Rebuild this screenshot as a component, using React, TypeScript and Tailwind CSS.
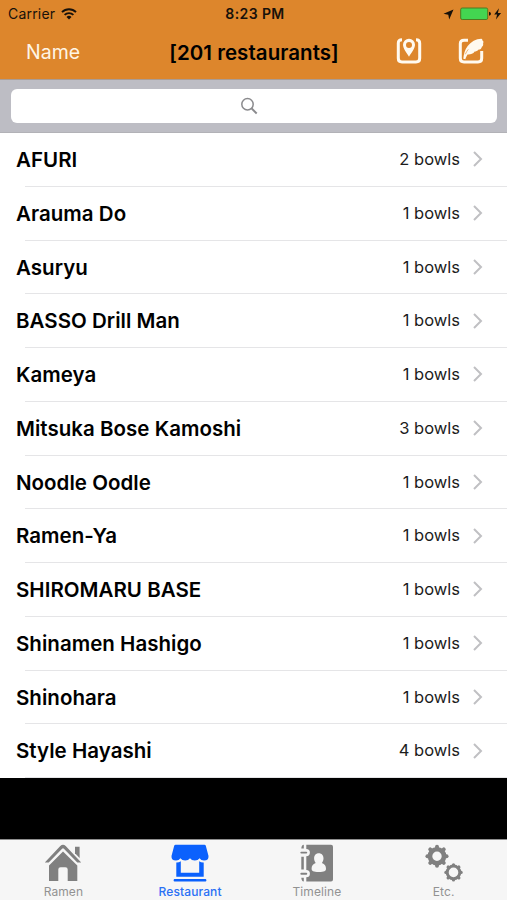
import React from "react";

const restaurants = [
    { name: "AFURI", bowls: 2 },
    { name: "Arauma Do", bowls: 1 },
    { name: "Asuryu", bowls: 1 },
    { name: "BASSO Drill Man", bowls: 1 },
    { name: "Kameya", bowls: 1 },
    { name: "Mitsuka Bose Kamoshi", bowls: 3 },
    { name: "Noodle Oodle", bowls: 1 },
    { name: "Ramen-Ya", bowls: 1 },
    { name: "SHIROMARU BASE", bowls: 1 },
    { name: "Shinamen Hashigo", bowls: 1 },
    { name: "Shinohara", bowls: 1 },
    { name: "Style Hayashi", bowls: 4 },
];

function WifiIcon() {
    return (
        <svg width="16" height="12" viewBox="0 0 16 12" fill="none" stroke="#17110a" strokeWidth="1.9">
            <path d="M1 4.1a10 10 0 0 1 14 0" />
            <path d="M3.6 6.9a6.3 6.3 0 0 1 8.8 0" />
            <path d="M8 11.4 5.5 8.9a3.6 3.6 0 0 1 5 0z" fill="#17110a" stroke="none" />
        </svg>
    );
}

function MapIcon() {
    return (
        <svg width="26" height="26" viewBox="0 0 26 26" fill="none">
            <path
                d="M6 1.700C3.400 1.700 2.300 3 2.300 5.200V20.200c0 2.600 1.200 3.700 3.700 3.700h14c2.500 0 3.700-1.100 3.700-3.700V5.200c0-2.200-1.100-3.500-3.700-3.500"
                stroke="#fffaf0"
                strokeWidth="3"
            />
            <path
                fillRule="evenodd"
                d="M13 .8a6 6 0 0 0-6 6c0 3.500 3.300 7.500 6 12 2.700-4.500 6-8.500 6-12a6 6 0 0 0-6-6zm0 3.100a3 3 0 1 1 0 6 3 3 0 0 1 0-6z"
                fill="#fffaf0"
            />
        </svg>
    );
}

function ComposeIcon() {
    return (
        <svg width="26" height="26" viewBox="0 0 26 26" fill="none">
            <path
                d="M10 2.200H6C3.500 2.200 2.300 3.400 2.300 5.800v14.400c0 2.600 1.200 3.700 3.700 3.700h14c2.500 0 3.700-1.100 3.700-3.700V13"
                stroke="#fffaf0"
                strokeWidth="3"
            />
            <path
                d="M5.300 20.800c.5-4.600 1.500-9 4.200-12.500C13 3.800 18 .9 23.300.8c1 .1 1.200 1.200 1.100 1.800 1.300.7 1.200 1.800.7 2.800.4 1.600-.2 2.700-1.200 3.300-.4 2.200-1.700 2.800-3.200 2.800-1.300 1.700-2.800 1.900-4 2-1.700 2.400-4.200 3.200-7.200 3-1 1.800-1.700 3-2.100 4.800z"
                fill="#fffaf0"
            />
            <path d="M7.300 16.300c.9-2 1.800-3.500 3-5" stroke="#dd862c" strokeWidth=".6" />
        </svg>
    );
}

function RamenIcon() {
    return (
        <svg width="38" height="38" viewBox="0 0 38 38" fill="#808080">
            <path d="M.8 18.500 16.300 2q2.700-2.700 5.400 0L37.200 18.500h-3.900L19.900 4.700q-.9-.9-1.800 0L4.700 18.500z" />
            <path d="M31 2.800h4.600v11.300L31 9.300z" />
            <path d="M19 7.500 33.300 21.500V37h-9.600V25.500q0-2.300-2.300-2.300h-4.800q-2.300 0-2.300 2.300V37H5V21.500z" />
        </svg>
    );
}

function RestaurantIcon() {
    return (
        <svg width="38" height="38" viewBox="0 0 38 38" fill="#0b61fd">
            <path d="M4.500.8h29q1 0 1.300 1L37.500 12q.3 4.600-4.500 4.600-3 0-4.400-2.400-1.600 2.400-4.800 2.400T19 14.200q-1.600 2.400-4.800 2.400t-4.800-2.400Q8 16.600 5 16.600.2 16.600.5 12L3.200 1.800q.3-1 1.300-1z" />
            <path d="M5.300 18.500q2.600.2 4.500-1.300V28.700h18.400V17.200q1.900 1.500 4.500 1.300v14.200H5.300z" />
            <path d="M3.500 35h31q.8 0 .8 1.200t-.8 1.200h-31q-.8 0-.8-1.200T3.500 35z" />
        </svg>
    );
}

function TimelineIcon() {
    return (
        <svg width="38" height="38" viewBox="0 0 38 38" fill="#808080">
            <path d="M8.300.7H33q2 0 2 2v32.800q0 2-2 2H8.300v-4.200a3.600 3.600 0 0 0 0-7.200V12.200a3.600 3.600 0 0 0 0-7.200z" />
            <path d="M5.800.7v3.800H3.300Q3.500.9 5.800.7zM3.300 12.700h2.500v12.800H3.300zM3.300 33.700h2.500v3.800q-2.300-.2-2.500-3.800z" />
            <path d="M3.300 8.600h5M3.300 29.700h5" stroke="#808080" strokeWidth="1.900" strokeLinecap="round" />
            <path
                d="M20.800 9.300c3 0 4.700 2.200 4.700 5 0 2-.8 3.400-1.600 4.800 2.900 1.100 4.100 2.800 4.100 5.700 0 2.100-1.700 3.200-7.200 3.200s-7.200-1.100-7.200-3.200c0-2.900 1.200-4.600 4.100-5.700-.8-1.400-1.600-2.800-1.600-4.800 0-2.800 1.700-5 4.700-5z"
                fill="#f6f6f6"
            />
        </svg>
    );
}

const teeth = [0, 45, 90, 135, 180, 225, 270, 315];

function EtcIcon() {
    return (
        <svg width="38" height="38" viewBox="0 0 38 38" fill="none" stroke="#808080">
            <circle cx="12" cy="12.200" r="7" strokeWidth="4.600" />
            {teeth.map((deg) => (
                <path key={deg} d="M12 3.900V2.600" strokeWidth="3.900" strokeLinecap="round" transform={`rotate(${deg} 12 12.200)`} />
            ))}
            <circle cx="28.500" cy="28.400" r="6.300" strokeWidth="3" />
            {teeth.map((deg) => (
                <path key={deg} d="M28.500 21.200v-.4" strokeWidth="3.200" strokeLinecap="round" transform={`rotate(${deg} 28.500 28.400)`} />
            ))}
        </svg>
    );
}

const tabs = [
    { label: "Ramen", icon: RamenIcon, active: false },
    { label: "Restaurant", icon: RestaurantIcon, active: true },
    { label: "Timeline", icon: TimelineIcon, active: false },
    { label: "Etc.", icon: EtcIcon, active: false },
];

export default function App() {
    return (
        <div className="flex h-[900px] w-[507px] flex-col overflow-hidden bg-black font-['Inter',sans-serif] text-black">
            {/* Status bar + navigation */}
            <header className="h-[79px] shrink-0 bg-[#dd862c]">
                <div className="grid h-7 grid-cols-[1fr_auto_1fr] items-center pl-2 pr-[5px] text-[14px] leading-none text-[#17110a]">
                    <div className="flex items-center gap-1.5">
                        <span className="tracking-[0.2px]">Carrier</span>
                        <WifiIcon />
                    </div>
                    <span className="text-center text-[14px] font-semibold tracking-[0.4px]">8:23 PM</span>
                    <div className="flex items-center justify-end">
                        <svg width="11" height="11" viewBox="0 0 11 11" className="mr-1.5">
                            <path d="M10.500.5 6.200 10.500 5.300 5.700.5 4.800z" fill="#17110a" />
                        </svg>
                        <svg width="42" height="14" viewBox="0 0 42 14">
                            <rect x=".7" y="1" width="27" height="11.500" rx="1.500" fill="#43d551" stroke="#4e7a20" />
                            <path d="M29 4.800q2 .3 2 2t-2 2z" fill="#17110a" />
                            <path d="m39 1.200-4.800 6.300h2.900l-1.200 5L41.100 6h-3.200z" fill="#17110a" />
                        </svg>
                    </div>
                </div>
                <nav className="grid h-[48px] grid-cols-[1fr_auto_1fr] items-center pl-[26px] pr-[23px]">
                    <button className="pt-0.5 text-left text-[19.500px] text-[#fff5e5]">Name</button>
                    <h1 className="-ml-0.5 pt-0.5 text-[20.500px] font-semibold tracking-[0.05px]">[201 restaurants]</h1>
                    <div className="ml-auto flex w-[88px] items-center justify-between pb-0.5">
                        <button aria-label="Map"><MapIcon /></button>
                        <button aria-label="Compose"><ComposeIcon /></button>
                    </div>
                </nav>
            </header>

            {/* Search */}
            <div className="h-[54px] shrink-0 border-b border-t border-b-[#b2b2b7] border-t-[#aa9c94] bg-[#bdbdc4] pl-[11px] pr-2.5 pt-[9px]">
                <div className="flex h-[34px] items-center justify-center rounded-md bg-white">
                    <svg width="18" height="18" viewBox="0 0 18 18" fill="none" stroke="#8a8a8d" strokeWidth="1.500" className="-ml-[11px]">
                        <circle cx="7.500" cy="7.300" r="5.700" />
                        <path d="m11.700 11.500 5 5" strokeWidth="1.900" />
                    </svg>
                </div>
            </div>

            {/* Restaurants */}
            <ul className="h-[645px] shrink-0 bg-white">
                {restaurants.map((r) => (
                    <li key={r.name} className="flex h-[53.75px] flex-col">
                        <div className="flex flex-1 items-center pl-4 pr-6">
                            <span className="flex-1 pt-0.5 text-[20.500px] font-semibold tracking-[0.03px]">{r.name}</span>
                            <span className="text-[16.500px] text-[#1c1c1c]">{r.bowls} bowls</span>
                            <svg width="11" height="18" viewBox="0 0 11 18" fill="none" stroke="#c0c0c3" strokeWidth="2" className="ml-3">
                                <path d="m2 2 7 7-7 7" />
                            </svg>
                        </div>
                        <div className="ml-[25px] h-px bg-[#e5e5e7]" />
                    </li>
                ))}
            </ul>

            <div className="flex-1" />

            {/* Tab bar */}
            <nav className="grid h-[61px] shrink-0 grid-cols-4 border-t border-[#8e8e8e] bg-[#f6f6f6] pt-1">
                {tabs.map(({ label, icon: Icon, active }) => (
                    <button
                        key={label}
                        className={`flex flex-col items-center text-[12px] leading-[19px] tracking-[0.1px] ${active ? "font-medium text-[#2a70f5]" : "text-[#929292]"}`}
                    >
                        <Icon />
                        {label}
                    </button>
                ))}
            </nav>
        </div>
    );
}
